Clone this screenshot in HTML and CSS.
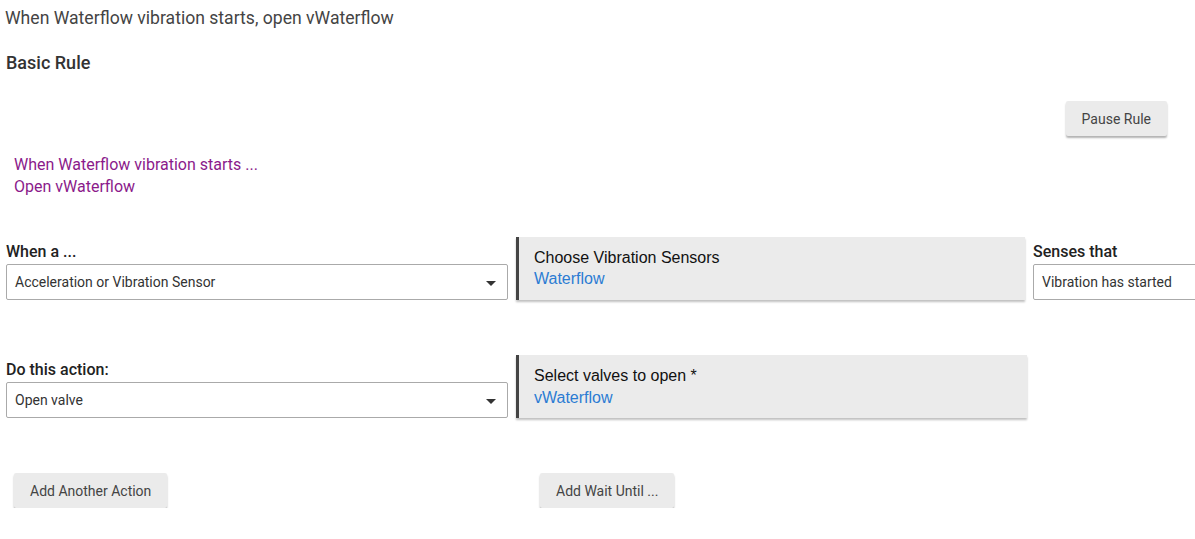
FILE: index.html
```html
<!DOCTYPE html>
<html>
<head>
<meta charset="utf-8">
<link rel="stylesheet" href="styles.css">
</head>
<body>
<div class="title">When Waterflow vibration starts, open vWaterflow</div>
<div class="heading">Basic Rule</div>
<div class="pause-row"><button class="btn">Pause Rule</button></div>
<div class="desc">
  <div>When Waterflow vibration starts ...</div>
  <div>Open vWaterflow</div>
</div>
<div class="grid">
  <div class="field">
    <div class="label">When a ...</div>
    <div class="select"><span>Acceleration or Vibration Sensor</span><span class="arrow"></span></div>
  </div>
  <div class="panel">
    <div class="panel-title">Choose Vibration Sensors</div>
    <div class="panel-value">Waterflow</div>
  </div>
  <div class="field">
    <div class="label">Senses that</div>
    <div class="select narrow"><span>Vibration has started</span></div>
  </div>

  <div class="field row2">
    <div class="label">Do this action:</div>
    <div class="select"><span>Open valve</span><span class="arrow"></span></div>
  </div>
  <div class="panel row2 p2">
    <div class="panel-title">Select valves to open *</div>
    <div class="panel-value">vWaterflow</div>
  </div>
  <div class="row2"></div>

  <div class="btn-cell row3"><button class="btn">Add Another Action</button></div>
  <div class="btn-cell row3 indent"><button class="btn">Add Wait Until ...</button></div>
  <div class="row3"></div>
</div>
</body>
</html>
```

FILE: styles.css
```css
body {
  margin: 0;
  font-family: Roboto, "Liberation Sans", sans-serif;
  background: #fff;
  overflow: hidden;
}
.title {
  padding: 8px 5px 0;
  font-size: 17.6px;
  line-height: 20px;
  font-weight: 400;
  color: #444;
}
.heading {
  margin-top: 25px;
  padding-left: 6px;
  font-size: 18px;
  line-height: 20px;
  font-weight: 500;
  color: #333;
}
.pause-row {
  display: flex;
  justify-content: flex-end;
  padding-right: 28px;
  margin-top: 28px;
}
.btn {
  font-family: Roboto, "Liberation Sans", sans-serif;
  font-size: 14px;
  color: #444;
  background: #ebebeb;
  border: none;
  border-radius: 2px;
  height: 35px;
  padding: 0 16px;
  box-shadow: 0 2px 2px rgba(0,0,0,0.3);
}
.desc {
  margin-top: 18px;
  padding-left: 14px;
  font-size: 16px;
  line-height: 22px;
  color: #8b1a8b;
}
.grid {
  display: grid;
  grid-template-columns: 502px 509px 200px;
  column-gap: 8px;
  padding-left: 6px;
  margin-top: 39px;
  align-items: end;
}
.field .label {
  font-size: 16px;
  line-height: 18px;
  font-weight: 500;
  color: #222;
  margin-bottom: 3px;
}
.select {
  box-sizing: border-box;
  height: 36px;
  border: 1px solid #aaa;
  border-radius: 2px;
  display: flex;
  align-items: center;
  justify-content: space-between;
  padding: 0 11px 0 8px;
  font-size: 14px;
  color: #333;
}
.select.narrow {
  width: 200px;
}
.arrow {
  width: 0;
  height: 0;
  border-left: 5px solid transparent;
  border-right: 5px solid transparent;
  border-top: 5px solid #333;
  margin-top: 2px;
}
.panel {
  box-sizing: border-box;
  height: 63px;
  background: #ebebeb;
  border-left: 3px solid #444;
  padding: 10px 15px;
  font-family: "Liberation Sans", Arial, sans-serif;
  font-size: 16px;
  line-height: 21px;
  box-shadow: 0 2px 2px rgba(0,0,0,0.25);
}
.panel.p2 {
  line-height: 22px;
  width: 511px;
}
.panel-title {
  color: #111;
}
.panel-value {
  color: #2b7cd3;
}
.row2 {
  margin-top: 55px;
}
.row3 {
  margin-top: 55px;
}
.btn-cell {
  padding-left: 8px;
}
.btn-cell.indent {
  padding-left: 24px;
}
```
